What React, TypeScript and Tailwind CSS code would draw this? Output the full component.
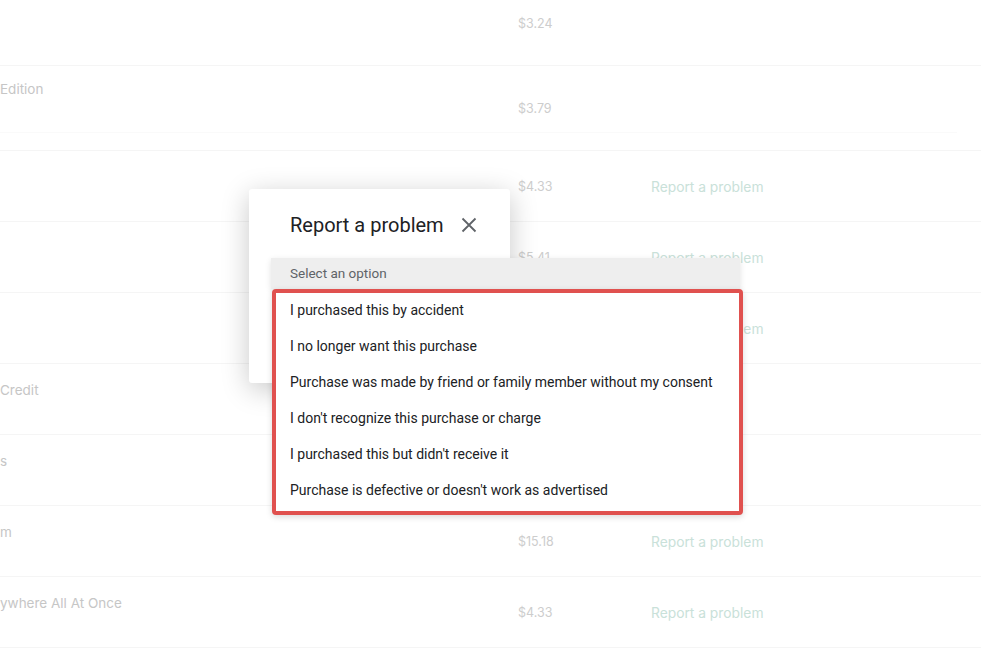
import React from "react";

const bgFont = { fontFamily: "Inter, 'Open Sans', sans-serif" };
const uiFont = { fontFamily: "Roboto, 'Liberation Sans', sans-serif" };

type Row = { h: string; title?: string; price?: string; report?: boolean; titleTop: string; priceTop: string; inner?: boolean };

const rows: Row[] = [
  { h: "h-[66px]", price: "$3.24", titleTop: "pt-[15px]", priceTop: "pt-[15px]" },
  { h: "h-[85px]", title: "Edition", price: "$3.79", titleTop: "pt-[14px]", priceTop: "pt-[34px]", inner: true },
  { h: "h-[71px]", price: "$4.33", report: true, titleTop: "pt-[17px]", priceTop: "pt-[27px]" },
  { h: "h-[71px]", price: "$5.41", report: true, titleTop: "pt-[17px]", priceTop: "pt-[27px]" },
  { h: "h-[71px]", price: "$2.16", report: true, titleTop: "pt-[17px]", priceTop: "pt-[27px]" },
  { h: "h-[71px]", title: "Credit", price: "$7.58", titleTop: "pt-[17px]", priceTop: "pt-[27px]" },
  { h: "h-[71px]", title: "s", price: "$3.24", titleTop: "pt-[17px]", priceTop: "pt-[27px]" },
  { h: "h-[71px]", title: "m", price: "$15.18", report: true, titleTop: "pt-[17px]", priceTop: "pt-[27px]" },
  { h: "h-[71px]", title: "ywhere All At Once", price: "$4.33", report: true, titleTop: "pt-[17px]", priceTop: "pt-[27px]" },
  { h: "h-[71px]", titleTop: "pt-[17px]", priceTop: "pt-[27px]" },
];

const options = [
  "I purchased this by accident",
  "I no longer want this purchase",
  "Purchase was made by friend or family member without my consent",
  "I don't recognize this purchase or charge",
  "I purchased this but didn't receive it",
  "Purchase is defective or doesn't work as advertised",
];

export default function App() {
  return (
    <div className="relative w-[981px] h-[654px] overflow-hidden bg-white" style={bgFont}>
      <div className="flex flex-col">
        {rows.map((r, i) => (
          <div key={i} className={`relative flex ${r.h} border-b border-[#f5f5f5]`}>
            <div className={`w-[518px] ${r.titleTop} text-[13.5px] leading-[18px] text-[#c6c6c6]`}>
              {r.title}
            </div>
            <div className={`w-[133px] ${r.priceTop} text-[12.5px] leading-[18px] text-[#cdcdcd]`}>{r.price}</div>
            <div className={`${r.priceTop} text-[13.8px] leading-[18px] text-[#c9e1d9]`}>
              {r.report ? "Report a problem" : ""}
            </div>
            {r.inner && <div className="absolute left-0 top-[66px] w-[957px] border-b border-[#fafafa]" />}
          </div>
        ))}
      </div>

      {/* Dialog */}
      <div
        className="absolute left-[249px] top-[189px] w-[261px] h-[194px] bg-white rounded-[3px] shadow-[0_6px_28px_rgba(0,0,0,0.22)]"
        style={uiFont}
      >
        <div className="flex items-center pl-[41px] pt-[22px]">
          <span className="text-[20px] leading-[28px] text-[#202124]">Report a problem</span>
          <svg className="ml-[17px]" width="16" height="16" viewBox="0 0 16 16" fill="none">
            <path d="M1.5 1.5 L14.5 14.5 M14.5 1.5 L1.5 14.5" stroke="#5f6368" strokeWidth="1.8" />
          </svg>
        </div>
      </div>

      {/* Dropdown */}
      <div className="absolute left-[271px] top-[258px] w-[472px] flex flex-col" style={uiFont}>
        <div className="w-[469px] h-[31px] bg-[#eeeeee] flex items-center pl-[19px] text-[13.5px] text-[#5f6368] shadow-[0_2px_6px_rgba(0,0,0,0.12)]">
          Select an option
        </div>
        <div className="ml-[1px] w-[471px] h-[226px] border-[4px] border-[#e0514f] rounded-[4px] bg-white shadow-[0_2px_6px_rgba(0,0,0,0.15)] flex flex-col">
          {options.map((o) => (
            <div key={o} className="h-[36px] flex items-center pl-[14px] pb-[1px] text-[14px] text-[#202124]">
              {o}
            </div>
          ))}
        </div>
      </div>
    </div>
  );
}
